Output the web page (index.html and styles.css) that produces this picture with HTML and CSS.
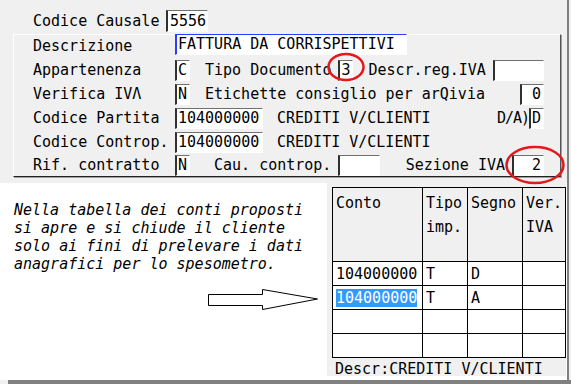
FILE: index.html
```html
<!DOCTYPE html>
<html>
<head>
<meta charset="utf-8">
<link rel="stylesheet" href="styles.css">
</head>
<body>
<div class="screen">
  <div class="win">
    <div class="top">
      <div class="row first">
        <span class="lbl lbl-first">Codice Causale</span><span class="fld w-caus">5556</span>
      </div>
      <div class="group">
        <div class="row r-descr">
          <span class="lbl">Descrizione</span><span class="fld focus w-descr">FATTURA DA CORRISPETTIVI</span>
        </div>
        <div class="row">
          <span class="lbl">Appartenenza</span><span class="fld w1">C</span><span class="txt ml15">Tipo Documento</span><span class="fld w1 ml7">3</span><span class="txt ml15">Descr.reg.IVA</span><span class="fld w-reg push"></span>
        </div>
        <div class="row">
          <span class="lbl">Verifica IVΛ</span><span class="fld w1">N</span><span class="txt ml15">Etichette consiglio per arQivia</span><span class="fld w-zero push num">0</span>
        </div>
        <div class="row">
          <span class="lbl">Codice Partita</span><span class="fld w-cod">104000000</span><span class="txt ml14">CREDITI V/CLIENTI</span><span class="txt push da">D/A)</span><span class="fld w1">D</span>
        </div>
        <div class="row">
          <span class="lbl">Codice Controp.</span><span class="fld w-cod">104000000</span><span class="txt ml14">CREDITI V/CLIENTI</span>
        </div>
        <div class="row r-last">
          <span class="lbl">Rif. contratto</span><span class="fld w1">N</span><span class="txt ml24">Cau. controp.</span><span class="fld w-cau ml7">
</span><span class="txt push">Sezione IVA</span><span class="fld w-sez ml7 num">2</span>
        </div>
      </div>
    </div>
    <div class="bottom">
      <div class="note">
        <p class="note-text">Nella tabella dei conti proposti<br>si apre e si chiude il cliente<br>solo ai fini di prelevare i dati<br>anagrafici per lo spesometro.</p>
        <svg class="arrow" width="112" height="24" viewBox="0 0 112 24">
          <path d="M0.5 6.5 H54.5 V1.5 L109.5 11 L54.5 21.5 V17.5 H0.5 Z" fill="#fff" stroke="#000" stroke-width="1"/>
        </svg>
      </div>
      <div class="panel">
        <table class="grid">
          <colgroup><col class="c1"><col class="c2"><col class="c3"><col class="c4"></colgroup>
          <thead>
            <tr><th>Conto</th><th>Tipo<br>imp.</th><th>Segno</th><th>Ver.<br>IVA</th></tr>
          </thead>
          <tbody>
            <tr><td>104000000</td><td>T</td><td>D</td><td></td></tr>
            <tr><td><span class="sel">104000000</span></td><td>T</td><td>A</td><td></td></tr>
            <tr><td></td><td></td><td></td><td></td></tr>
            <tr><td></td><td></td><td></td><td></td></tr>
          </tbody>
        </table>
        <div class="descr">Descr:CREDITI V/CLIENTI</div>
      </div>
    </div>
    <svg class="ring ring-tipo" width="40" height="30" viewBox="0 0 40 30"><ellipse cx="20" cy="15" rx="17.5" ry="13" fill="none" stroke="#e3181b" stroke-width="2.5"/></svg>
    <svg class="ring ring-sez" width="62" height="42" viewBox="0 0 62 42"><ellipse cx="31" cy="21" rx="28.5" ry="18" fill="none" stroke="#e3181b" stroke-width="2.5"/></svg>
  </div>
  <div class="shadow"></div>
</div>
</body>
</html>
```

FILE: styles.css
```css
* { box-sizing: border-box; }
html, body { margin: 0; padding: 0; }
body {
  width: 571px;
  height: 384px;
  overflow: hidden;
  background: #f0f0f0;
  font-family: "DejaVu Sans Mono", "Liberation Mono", monospace;
  font-size: 15px;
  color: #000;
}
.screen { width: 571px; height: 384px; }
.win {
  position: relative;
  width: 569px;
  height: 380px;
  border-right: 2px solid #808080;
  background: #fff;
  display: flex;
  flex-direction: column;
}
.shadow {
  margin-left: 8px;
  height: 4px;
  background: #808080;
}
.top {
  background: #f0f0f0;
  height: 183px;
  padding-top: 10px;
}
.row {
  display: flex;
  align-items: center;
  height: 24px;
  white-space: pre;
}
.first { height: 22px; padding-left: 33px; }
.lbl { width: 142px; flex: none; }
.lbl-first { width: 133px; }
.group {
  margin: 2px 0 0 13px;
  width: 548px;
  border-top: 1px solid #fff;
  border-left: 1px solid #fff;
  border-right: 1px solid #555;
  border-bottom: 1px solid #222;
  box-shadow: 1px 1px 0 #a0a0a0;
  padding: 0 16px 0 19px;
}
.r-descr { height: 23px; align-items: flex-start; }
.r-descr .lbl { line-height: 23px; }
.r-last { height: 22px; }
.fld {
  flex: none;
  height: 21px;
  background: #fff;
  border-style: solid;
  border-width: 1px 1px 1px 2px;
  border-color: #707070 #fff #fff #303030;
  padding: 0 1px;
  line-height: 19px;
  white-space: pre;
}
.first .fld { height: 22px; line-height: 20px; padding-left: 2px; }
.focus {
  margin-top: -1px;
  border-color: #2a3cff #fff #fff #2a3cff;
}
.num { text-align: right; padding-right: 2px; }
.w-caus { width: 42px; }
.w-descr { width: 232px; }
.w1 { width: 15px; }
.w-reg { width: 51px; }
.w-zero { width: 24px; }
.w-cod { width: 88px; }
.w-cau { width: 42px; }
.w-sez { width: 32px; }
.txt { flex: none; }
.ml7 { margin-left: 7px; }
.ml14 { margin-left: 14px; }
.ml15 { margin-left: 15px; }
.ml24 { margin-left: 24px; }
.push { margin-left: auto; }
.da { letter-spacing: -1px; }

.bottom {
  flex: 1;
  display: flex;
  background: #fff;
}
.note {
  width: 327px;
  flex: none;
  padding: 18px 0 0 14px;
}
.note-text {
  margin: 0;
  font-style: italic;
  line-height: 18px;
  white-space: nowrap;
}
.arrow { display: block; margin: 15px 0 0 194px; }
.panel {
  width: 239px;
  height: 193px;
  background: #f0f0f0;
  padding: 4px 0 0 5px;
}
.grid {
  border-collapse: collapse;
  table-layout: fixed;
  width: 233px;
}
.c1 { width: 90px; }
.c2 { width: 45px; }
.c3 { width: 55px; }
.c4 { width: 43px; }
.grid th, .grid td {
  border: 1px solid #000;
  padding: 0 0 0 3px;
  text-align: left;
  font-weight: normal;
  white-space: nowrap;
  overflow: hidden;
}
.grid th {
  background: #f0f0f0;
  vertical-align: top;
  height: 74px;
  line-height: 24px;
  padding-top: 3px;
}
.grid td {
  background: #fff;
  height: 24px;
  line-height: 22px;
}
.sel {
  display: inline-block;
  background: #3399ff;
  color: #fff;
  line-height: 18px;
}
.descr {
  line-height: 20px;
  padding: 1px 0 0 3px;
}
.ring { position: absolute; }
.ring-tipo { left: 326px; top: 52px; }
.ring-sez { left: 504px; top: 144px; }
```
